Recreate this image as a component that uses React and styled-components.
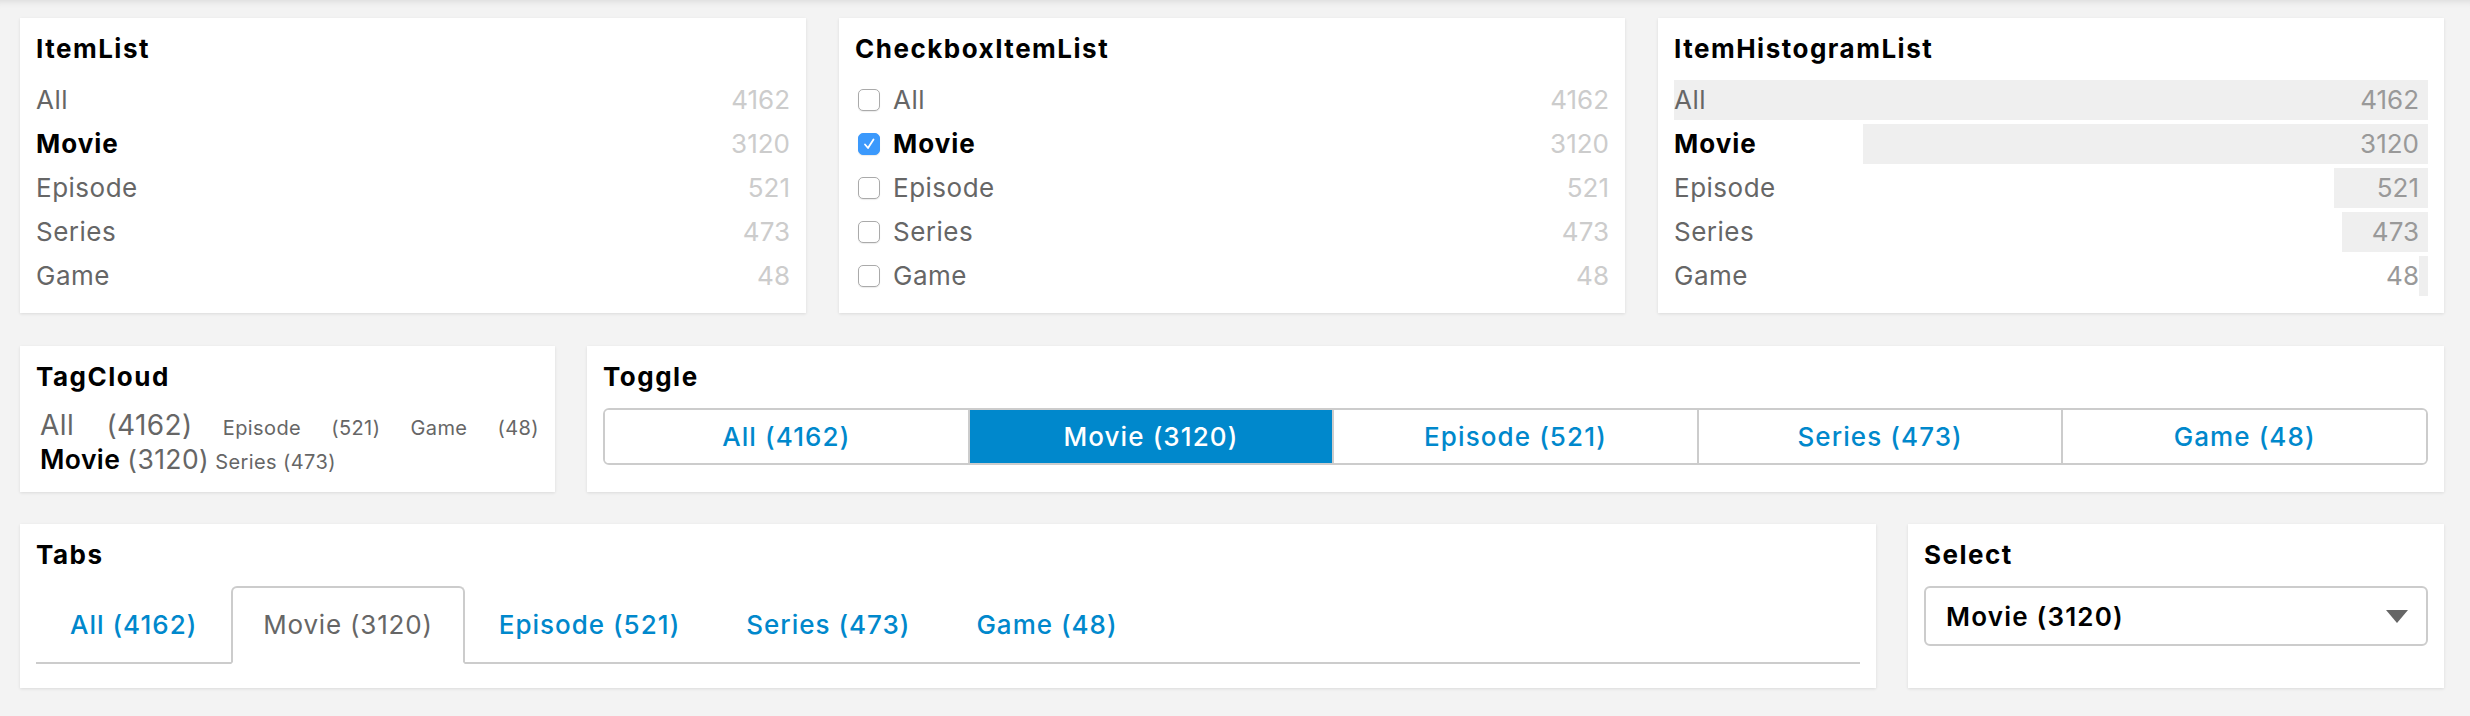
import React from 'react'
import styled, { createGlobalStyle } from 'styled-components'

const GlobalStyle = createGlobalStyle`
  html, body {
    margin: 0;
    background: #f3f3f3;
  }
  body {
    font-family: Inter, "Helvetica Neue", Arial, sans-serif;
    color: #000;
  }
`

const items = [
  { label: 'All', count: 4162 },
  { label: 'Movie', count: 3120 },
  { label: 'Episode', count: 521 },
  { label: 'Series', count: 473 },
  { label: 'Game', count: 48 }
]
const selected = 'Movie'
const maxCount = Math.max(...items.map(d => d.count))

// tag cloud sizes, picked by hand to match the log-ish scale of the original
const tagSizes = { All: 28, Movie: 26.5, Episode: 20, Series: 20, Game: 20 }

const Page = styled.div`
  box-sizing: border-box;
  min-height: 716px;
  padding: 18px 26px 30px 20px;
  display: flex;
  flex-direction: column;
  gap: 32px;
  box-shadow: inset 0 8px 8px -8px rgba(0, 0, 0, 0.14);
`

const Row = styled.div`
  display: flex;
  gap: ${p => p.$gap || 32}px;
  align-items: stretch;
  margin-bottom: ${p => p.$mb || 0}px;
`

const Card = styled.div`
  box-sizing: border-box;
  flex: ${p => (p.$width ? `0 0 ${p.$width}px` : '1 1 0')};
  min-width: 0;
  background: #fff;
  padding: 16px 16px ${p => p.$pb || 17}px;
  box-shadow: 0 1px 3px rgba(0, 0, 0, 0.1);
`

const Title = styled.h3`
  margin: 0 0 16px;
  font-size: 26px;
  line-height: 30px;
  font-weight: 700;
  letter-spacing: 1.5px;
`

const List = styled.div`
  display: flex;
  flex-direction: column;
  gap: 4px;
`

const ListRow = styled.div`
  position: relative;
  display: flex;
  align-items: center;
  height: 40px;
  font-size: 26px;
  line-height: 30px;
  letter-spacing: 0.5px;
`

const Label = styled.span`
  position: relative;
  flex: 1;
  color: ${p => (p.$active ? '#000' : '#666')};
  font-weight: ${p => (p.$active ? 700 : 400)};
  letter-spacing: ${p => (p.$active ? 1 : 0.5)}px;
`

const Count = styled.span`
  position: relative;
  color: ${p => p.$color || '#ccc'};
  padding-right: ${p => p.$pad || 0}px;
  letter-spacing: 0;
`

const Bar = styled.div`
  position: absolute;
  top: 0;
  right: 0;
  bottom: 0;
  background: #efefef;
`

const Box = styled.span`
  box-sizing: border-box;
  width: 22px;
  height: 22px;
  margin: 0 13px 0 3px;
  border-radius: 5px;
  border: 1px solid ${p => (p.$checked ? '#3b99fc' : '#aaa')};
  background: ${p => (p.$checked ? '#3b99fc' : '#fff')};
  box-shadow: 0 1px 1px rgba(0, 0, 0, 0.08);
  display: flex;
  align-items: center;
  justify-content: center;
`

const Cloud = styled.div`
  padding: 3px 0 0 4px;
  text-align: justify;
  font-size: 20px;
  line-height: 34px;
  letter-spacing: 0.4px;
  color: #666;
`

const Tag = styled.span`
  white-space: nowrap;
  line-height: 1;
  font-size: ${p => p.$size}px;
  color: ${p => (p.$active ? '#000' : '#666')};
  font-weight: ${p => (p.$active ? 600 : 400)};
`

const TagCount = styled.span`
  color: #666;
  font-weight: 400;
`

const ToggleGroup = styled.div`
  display: flex;
  border: 2px solid #ccc;
  border-radius: 6px;
  overflow: hidden;
`

const ToggleButton = styled.div`
  flex: 1 1 0;
  height: 53px;
  display: flex;
  align-items: center;
  justify-content: center;
  font-size: 26px;
  font-weight: 500;
  letter-spacing: 1.1px;
  color: ${p => (p.$active ? '#fff' : '#0088cc')};
  background: ${p => (p.$active ? '#0088cc' : '#fff')};
  & + & {
    border-left: 2px solid #ccc;
  }
`

const TabBar = styled.div`
  display: flex;
  border-bottom: 2px solid #ccc;
  margin-bottom: 7px;
`

const Tab = styled.div`
  margin: 0 2px -2px 0;
  padding: 22px 30px;
  font-size: 26px;
  line-height: 30px;
  font-weight: ${p => (p.$active ? 400 : 500)};
  letter-spacing: ${p => (p.$active ? 0.8 : 1)}px;
  color: ${p => (p.$active ? '#666' : '#0088cc')};
  background: ${p => (p.$active ? '#fff' : 'transparent')};
  border: 2px solid ${p => (p.$active ? '#ccc' : 'transparent')};
  border-bottom-color: ${p => (p.$active ? '#fff' : 'transparent')};
  border-radius: 6px 6px 0 0;
  &:first-child {
    padding-left: 32px;
  }
`

const SelectBox = styled.div`
  box-sizing: border-box;
  height: 60px;
  display: flex;
  align-items: center;
  justify-content: space-between;
  padding: 0 18px 0 20px;
  border: 2px solid #ccc;
  border-radius: 6px;
  font-size: 26px;
  font-weight: 600;
  letter-spacing: 1.2px;
`

const ItemList = () => (
  <Card>
    <Title>ItemList</Title>
    <List>
      {items.map(d => (
        <ListRow key={d.label}>
          <Label $active={d.label === selected}>{d.label}</Label>
          <Count>{d.count}</Count>
        </ListRow>
      ))}
    </List>
  </Card>
)

const Check = () => (
  <svg width="14" height="14" viewBox="0 0 14 14">
    <path d="M3 7.5 L6 11 L11.5 2.5" fill="none" stroke="#fff" strokeWidth="1.8" strokeLinecap="round" strokeLinejoin="round" />
  </svg>
)

const CheckboxItemList = () => (
  <Card>
    <Title>CheckboxItemList</Title>
    <List>
      {items.map(d => (
        <ListRow key={d.label}>
          <Box $checked={d.label === selected}>{d.label === selected && <Check />}</Box>
          <Label $active={d.label === selected}>{d.label}</Label>
          <Count>{d.count}</Count>
        </ListRow>
      ))}
    </List>
  </Card>
)

const ItemHistogramList = () => (
  <Card>
    <Title>ItemHistogramList</Title>
    <List>
      {items.map(d => (
        <ListRow key={d.label}>
          <Bar style={{ width: `${(d.count / maxCount) * 100}%` }} />
          <Label $active={d.label === selected}>{d.label}</Label>
          <Count $color="#999" $pad={9}>{d.count}</Count>
        </ListRow>
      ))}
    </List>
  </Card>
)

const TagCloud = () => {
  const sorted = [...items].sort((a, b) => a.label.localeCompare(b.label))
  return (
    <Card $width={535} $pb={13}>
      <Title>TagCloud</Title>
      <Cloud>
        {sorted.map(d => (
          <React.Fragment key={d.label}>
            <Tag $size={tagSizes[d.label]} $active={d.label === selected}>
              {d.label} <TagCount>({d.count})</TagCount>
            </Tag>{' '}
          </React.Fragment>
        ))}
      </Cloud>
    </Card>
  )
}

const Toggle = () => (
  <Card>
    <Title>Toggle</Title>
    <ToggleGroup>
      {items.map(d => (
        <ToggleButton key={d.label} $active={d.label === selected}>
          {d.label} ({d.count})
        </ToggleButton>
      ))}
    </ToggleGroup>
  </Card>
)

const Tabs = () => (
  <Card>
    <Title>Tabs</Title>
    <TabBar>
      {items.map(d => (
        <Tab key={d.label} $active={d.label === selected}>
          {d.label} ({d.count})
        </Tab>
      ))}
    </TabBar>
  </Card>
)

const Select = () => (
  <Card $width={536}>
    <Title>Select</Title>
    <SelectBox>
      <span>Movie (3120)</span>
      <svg width="22" height="13" viewBox="0 0 22 13">
        <polygon points="0,0 22,0 11,13" fill="#666" />
      </svg>
    </SelectBox>
  </Card>
)

export default function App() {
  return (
    <>
      <GlobalStyle />
      <Page>
        <Row $gap={33} $mb={1}>
          <ItemList />
          <CheckboxItemList />
          <ItemHistogramList />
        </Row>
        <Row>
          <TagCloud />
          <Toggle />
        </Row>
        <Row>
          <Tabs />
          <Select />
        </Row>
      </Page>
    </>
  )
}
